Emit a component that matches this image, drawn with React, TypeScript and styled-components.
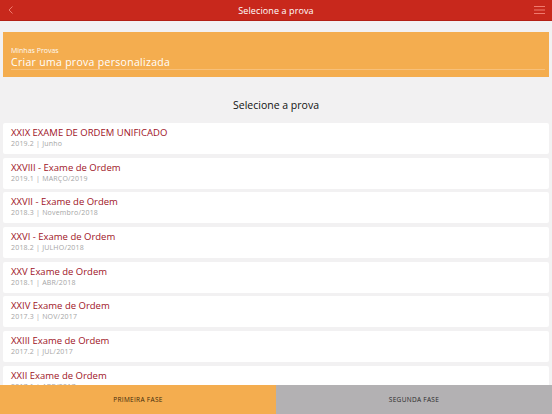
import React from "react";
import styled, { createGlobalStyle } from "styled-components";

const Global = createGlobalStyle`
  html, body { margin: 0; padding: 0; background: #f2f1f2; }
  body { font-family: "Open Sans", "Liberation Sans", sans-serif; }
  * { box-sizing: border-box; }
`;

const Page = styled.div`
  width: 552px;
  height: 414px;
  overflow: hidden;
  display: flex;
  flex-direction: column;
  background: #f2f1f2;
  position: relative;
`;

const Header = styled.header`
  height: 21px;
  flex: none;
  background: #c8281c;
  border-bottom: 1px solid #b32015;
  display: grid;
  grid-template-columns: 40px 1fr 40px;
  align-items: center;
  color: #fff;
`;

const HeaderTitle = styled.div`
  text-align: center;
  font-size: 9px;
  letter-spacing: 0.1px;
`;

const IconCell = styled.div<{ $align: "start" | "end" }>`
  display: flex;
  justify-content: ${(p) => (p.$align === "start" ? "flex-start" : "flex-end")};
  padding: ${(p) => (p.$align === "start" ? "0 0 0 7px" : "0 7px 0 0")};
  align-items: center;
`;

const Banner = styled.div`
  margin: 11px 3px 0 3px;
  height: 45px;
  background: #f4ad4f;
  padding: 15px 4px 0 8px;
  color: #fff;
  flex: none;
`;

const BannerLabel = styled.div`
  font-size: 7px;
  line-height: 8px;
  opacity: 0.95;
`;

const BannerInput = styled.div`
  font-size: 10.5px;
  line-height: 14px;
  letter-spacing: 0.3px;
  border-bottom: 1px solid #f7c07a;
  padding-bottom: 0;
`;

const SectionTitle = styled.h2`
  margin: 0;
  padding: 21px 0 11px;
  text-align: center;
  font-size: 10.5px;
  font-weight: 400;
  color: #111;
  line-height: 14px;
  flex: none;
`;

const List = styled.div`
  display: flex;
  flex-direction: column;
  gap: 3.7px;
  padding: 0 3px;
  flex: none;
`;

const Card = styled.div`
  height: 31px;
  background: #fff;
  border-radius: 2px;
  padding: 4px 8px 0 8px;
  flex: none;
`;

const CardTitle = styled.div`
  color: #a0141f;
  font-size: 9.5px;
  line-height: 12px;
`;

const CardSub = styled.div`
  color: #a5a5a5;
  font-size: 7px;
  line-height: 9px;
  letter-spacing: 0.2px;
`;

const Tabs = styled.nav`
  position: absolute;
  left: 0;
  right: 0;
  bottom: 0;
  height: 29px;
  display: grid;
  grid-template-columns: 1fr 1fr;
`;

const Tab = styled.div<{ $active?: boolean }>`
  background: ${(p) => (p.$active ? "#f4ad4f" : "#b3b1b3")};
  color: ${(p) => (p.$active ? "#3d2a0c" : "#2a2a2a")};
  display: flex;
  align-items: center;
  justify-content: center;
  font-size: 6.5px;
  letter-spacing: 0.3px;
`;

const items = [
  ["XXIX EXAME DE ORDEM UNIFICADO", "2019.2 | Junho"],
  ["XXVIII - Exame de Ordem", "2019.1 | MARÇO/2019"],
  ["XXVII - Exame de Ordem", "2018.3 | Novembro/2018"],
  ["XXVI - Exame de Ordem", "2018.2 | JULHO/2018"],
  ["XXV Exame de Ordem", "2018.1 | ABR/2018"],
  ["XXIV Exame de Ordem", "2017.3 | NOV/2017"],
  ["XXIII Exame de Ordem", "2017.2 | JUL/2017"],
  ["XXII Exame de Ordem", "2017.1 | ABR/2017"],
];

export default function App() {
  return (
    <Page>
      <Global />
      <Header>
        <IconCell $align="start">
          <svg width="8" height="10" viewBox="0 0 8 10">
            <path d="M5.5 1.5 L2 5 L5.5 8.5" fill="none" stroke="#f07a6e" strokeWidth="1" />
          </svg>
        </IconCell>
        <HeaderTitle>Selecione a prova</HeaderTitle>
        <IconCell $align="end">
          <svg width="11" height="10" viewBox="0 0 11 10">
            <path d="M0 1.5 H11 M0 5 H11 M0 8.5 H11" stroke="#f07a6e" strokeWidth="1" />
          </svg>
        </IconCell>
      </Header>
      <Banner>
        <BannerLabel>Minhas Provas</BannerLabel>
        <BannerInput>Criar uma prova personalizada</BannerInput>
      </Banner>
      <SectionTitle>Selecione a prova</SectionTitle>
      <List>
        {items.map(([t, s]) => (
          <Card key={t}>
            <CardTitle>{t}</CardTitle>
            <CardSub>{s}</CardSub>
          </Card>
        ))}
      </List>
      <Tabs>
        <Tab $active>PRIMEIRA FASE</Tab>
        <Tab>SEGUNDA FASE</Tab>
      </Tabs>
    </Page>
  );
}
